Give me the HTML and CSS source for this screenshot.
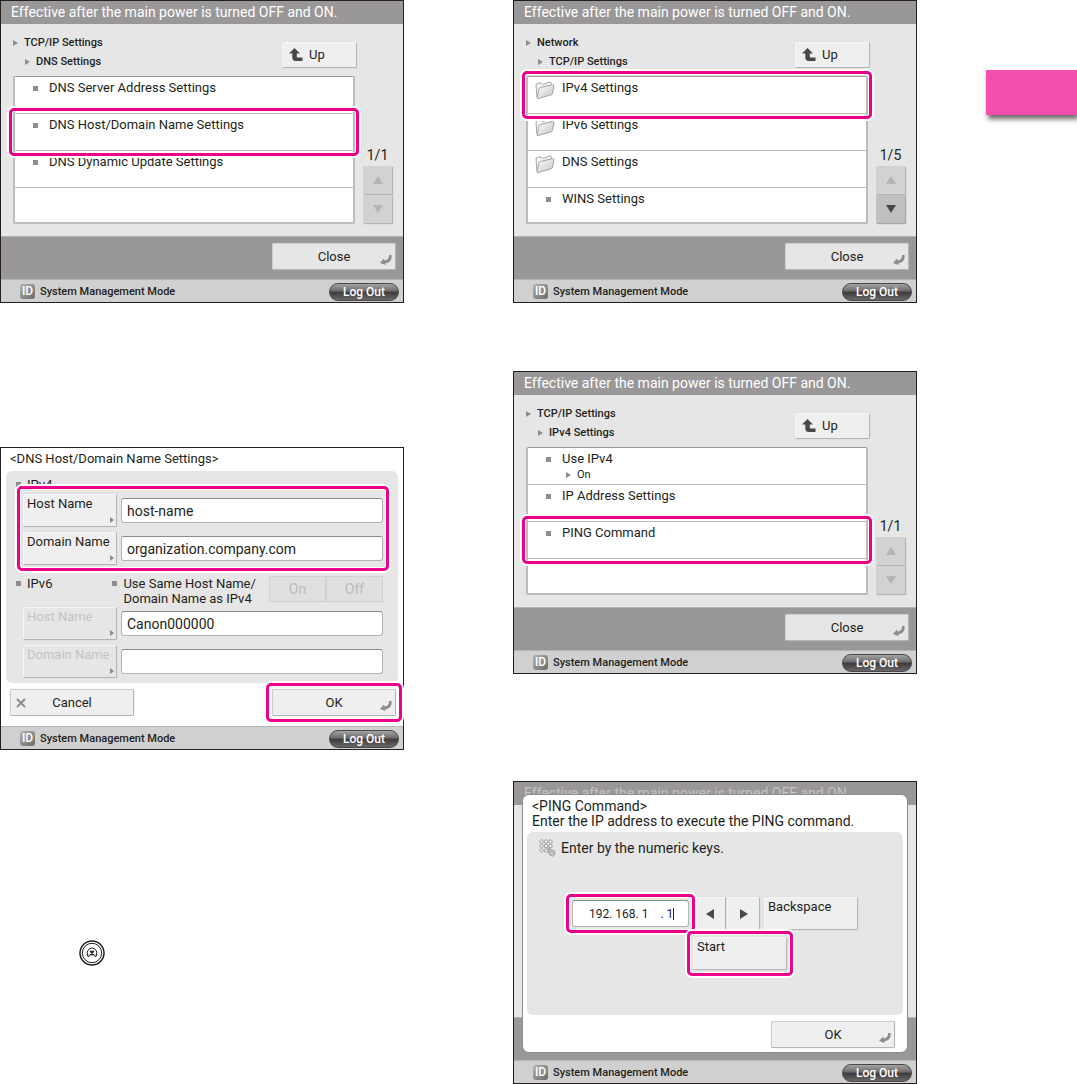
FILE: index.html
```html
<!DOCTYPE html>
<html lang="en">
<head>
    <meta charset="UTF-8">
    <meta name="viewport" content="width=device-width, initial-scale=1.0">
    <title>TCP/IP Settings</title>
    <link rel="stylesheet" href="styles.css">
</head>
<body>
    <!-- shared icons -->
    <svg class="defs" aria-hidden="true">
        <defs>
            <linearGradient id="folder-fill" x1="0" y1="0" x2="1" y2="1">
                <stop offset="0" stop-color="#ffffff"/>
                <stop offset="1" stop-color="#c4c4c4"/>
            </linearGradient>
            <symbol id="i-up" viewBox="0 0 14 14">
                <path d="M5.500 0 L11 5.500 H7.800 V8.500 Q7.800 9.500 8.800 9.500 H13.500 V13 H7 Q3.300 13 3.300 9.500 V5.500 H0 Z" fill="#4a4748"/>
            </symbol>
            <symbol id="i-enter" viewBox="0 0 12 10">
                <path d="M9 0 L11.500 0 Q12.500 7.500 5.500 8.300 L5.500 10 L0 8 L4 3.500 L4.500 5.500 Q9.500 5 9 0 Z" fill="#8f8c8d"/>
            </symbol>
            <symbol id="i-folder" viewBox="0 0 20 20">
                <path d="M2 17 L1 5 Q1 3.500 2.500 3.300 L6 3 L7.500 4.500 L15 2 Q16.500 2 16.500 3.500 V7" fill="#f4f4f4" stroke="#a4a4a4"/>
                <path d="M2 18 L4 9 Q4.300 7.800 5.500 7.500 L17.500 4.600 Q19 4.500 18.800 6 L17.500 13.500 Q17.300 14.500 16.300 14.800 L3 18.500 Q2 18.700 2 18 Z" fill="url(#folder-fill)" stroke="#a4a4a4"/>
            </symbol>
        </defs>
    </svg>

    <div class="page">
        <main class="columns">
            <div class="column">
                <!-- DNS Settings -->
                <section class="screen">
                    <header class="notice">Effective after the main power is turned OFF and ON.</header>
                    <div class="screen-body">
                        <div class="path-row">
                            <div class="path">
                                <p><i class="tri"></i>TCP/IP Settings</p>
                                <p class="sub"><i class="tri"></i>DNS Settings</p>
                            </div>
                            <button class="btn up"><svg><use href="#i-up"/></svg>Up</button>
                        </div>
                        <div class="list-row">
                            <ul class="list">
                                <li><i class="dot"></i>DNS Server Address Settings</li>
                                <li class="marked"><i class="dot"></i>DNS Host/Domain Name Settings<span class="mark"></span></li>
                                <li><i class="dot"></i>DNS Dynamic Update Settings</li>
                                <li></li>
                            </ul>
                            <div class="pager">
                                <span>1/1</span>
                                <button disabled aria-label="Previous page"><i class="arrow-up"></i></button>
                                <button disabled aria-label="Next page"><i class="arrow-down"></i></button>
                            </div>
                        </div>
                    </div>
                    <div class="actions">
                        <button class="btn wide">Close<svg class="enter"><use href="#i-enter"/></svg></button>
                    </div>
                    <footer class="status">
                        <span class="id">ID</span>
                        <span>System Management Mode</span>
                        <button class="logout">Log Out</button>
                    </footer>
                </section>

                <!-- DNS Host/Domain Name Settings -->
                <section class="screen screen-form">
                    <h2>&lt;DNS Host/Domain Name Settings&gt;</h2>
                    <div class="panel form">
                        <p class="label"><i class="dot"></i>IPv4</p>
                        <div class="fields marked">
                            <button class="btn key" id="host4">Host Name<i class="corner"></i></button>
                            <input class="field" type="text" value="host-name" aria-labelledby="host4">
                            <button class="btn key" id="domain4">Domain Name<i class="corner"></i></button>
                            <input class="field" type="text" value="organization.company.com" aria-labelledby="domain4">
                            <span class="mark"></span>
                        </div>
                        <div class="same-host">
                            <p class="label"><i class="dot"></i>IPv6</p>
                            <p class="label"><i class="dot"></i>Use Same Host Name/<br>Domain Name as IPv4</p>
                            <div class="switch">
                                <button disabled>On</button>
                                <button disabled>Off</button>
                            </div>
                        </div>
                        <div class="fields">
                            <button class="btn key" id="host6" disabled>Host Name<i class="corner"></i></button>
                            <input class="field" type="text" value="Canon000000" aria-labelledby="host6">
                            <button class="btn key" id="domain6" disabled>Domain Name<i class="corner"></i></button>
                            <input class="field" type="text" value="" aria-labelledby="domain6">
                        </div>
                    </div>
                    <div class="actions plain">
                        <button class="btn wide cancel"><svg viewBox="0 0 10 10"><path d="M1 1 L9 9 M9 1 L1 9" stroke="#8f8c8d" stroke-width="2"/></svg>Cancel</button>
                        <div class="marked">
                            <button class="btn wide">OK<svg class="enter"><use href="#i-enter"/></svg></button>
                            <span class="mark"></span>
                        </div>
                    </div>
                    <footer class="status">
                        <span class="id">ID</span>
                        <span>System Management Mode</span>
                        <button class="logout">Log Out</button>
                    </footer>
                </section>

                <!-- Settings/Registration key -->
                <svg class="settings-key" viewBox="0 0 26 26" role="img" aria-label="Settings key" fill="none" stroke="#231f20">
                    <circle cx="13" cy="13" r="12" stroke-width="1.500"/>
                    <circle cx="13" cy="13" r="9.700"/>
                    <path d="M9 15.500 A4.800 4.800 0 1 1 17 15.500 M8 14.500 L9 16.500 L11 15.500 M18 14.500 L17 16.500 L15 15.500"/>
                    <path d="M13 10.500 V15.500 M11 11 L15 15 M15 11 L11 15" stroke-width="1.300"/>
                </svg>
            </div>

            <div class="column">
                <!-- TCP/IP Settings -->
                <section class="screen">
                    <header class="notice">Effective after the main power is turned OFF and ON.</header>
                    <div class="screen-body">
                        <div class="path-row">
                            <div class="path">
                                <p><i class="tri"></i>Network</p>
                                <p class="sub"><i class="tri"></i>TCP/IP Settings</p>
                            </div>
                            <button class="btn up"><svg><use href="#i-up"/></svg>Up</button>
                        </div>
                        <div class="list-row">
                            <ul class="list">
                                <li class="marked"><svg class="folder"><use href="#i-folder"/></svg>IPv4 Settings<span class="mark"></span></li>
                                <li><svg class="folder"><use href="#i-folder"/></svg>IPv6 Settings</li>
                                <li><svg class="folder"><use href="#i-folder"/></svg>DNS Settings</li>
                                <li><i class="dot"></i>WINS Settings</li>
                            </ul>
                            <div class="pager">
                                <span>1/5</span>
                                <button disabled aria-label="Previous page"><i class="arrow-up"></i></button>
                                <button aria-label="Next page"><i class="arrow-down"></i></button>
                            </div>
                        </div>
                    </div>
                    <div class="actions">
                        <button class="btn wide">Close<svg class="enter"><use href="#i-enter"/></svg></button>
                    </div>
                    <footer class="status">
                        <span class="id">ID</span>
                        <span>System Management Mode</span>
                        <button class="logout">Log Out</button>
                    </footer>
                </section>

                <!-- IPv4 Settings -->
                <section class="screen screen-ipv4">
                    <header class="notice">Effective after the main power is turned OFF and ON.</header>
                    <div class="screen-body">
                        <div class="path-row">
                            <div class="path">
                                <p><i class="tri"></i>TCP/IP Settings</p>
                                <p class="sub"><i class="tri"></i>IPv4 Settings</p>
                            </div>
                            <button class="btn up"><svg><use href="#i-up"/></svg>Up</button>
                        </div>
                        <div class="list-row">
                            <ul class="list">
                                <li><i class="dot"></i><div>Use IPv4<p class="value"><i class="tri"></i>On</p></div></li>
                                <li><i class="dot"></i>IP Address Settings</li>
                                <li class="marked"><i class="dot"></i>PING Command<span class="mark"></span></li>
                                <li></li>
                            </ul>
                            <div class="pager">
                                <span>1/1</span>
                                <button disabled aria-label="Previous page"><i class="arrow-up"></i></button>
                                <button disabled aria-label="Next page"><i class="arrow-down"></i></button>
                            </div>
                        </div>
                    </div>
                    <div class="actions">
                        <button class="btn wide">Close<svg class="enter"><use href="#i-enter"/></svg></button>
                    </div>
                    <footer class="status">
                        <span class="id">ID</span>
                        <span>System Management Mode</span>
                        <button class="logout">Log Out</button>
                    </footer>
                </section>

                <!-- PING Command dialog -->
                <section class="screen screen-ping">
                    <header class="notice dim">Effective after the main power is turned OFF and ON.</header>
                    <div class="screen-body"></div>
                    <div class="actions"></div>
                    <footer class="status">
                        <span class="id">ID</span>
                        <span>System Management Mode</span>
                        <button class="logout">Log Out</button>
                    </footer>
                    <div class="dialog">
                        <h2>&lt;PING Command&gt;<br>Enter the IP address to execute the PING command.</h2>
                        <div class="panel">
                            <p class="hint">
                                <svg viewBox="0 0 17 18" fill="#f4f4f4" stroke="#9a9a9a">
                                    <circle cx="2.500" cy="2.500" r="1.700"/><circle cx="7" cy="2.500" r="1.700"/><circle cx="11.500" cy="2.500" r="1.700"/>
                                    <circle cx="2.500" cy="7" r="1.700"/><circle cx="7" cy="7" r="1.700"/><circle cx="11.500" cy="7" r="1.700"/>
                                    <circle cx="2.500" cy="11.500" r="1.700"/><circle cx="7" cy="11.500" r="1.700"/>
                                    <path d="M9 9 L10.500 8.500 L12 11 L15 11.500 L16 15 L13.500 17.300 L11 16 L9 13 L10.500 12.500 Z" fill="#c4c4c4"/>
                                </svg>
                                <label for="ip">Enter by the numeric keys.</label>
                            </p>
                            <div class="keys">
                                <div class="marked">
                                    <div class="field ip">
                                        <input id="ip" type="text" value="192. 168. 1    . 1">
                                        <i class="caret"></i>
                                    </div>
                                    <span class="mark"></span>
                                </div>
                                <div class="move">
                                    <button class="btn" aria-label="Left"><i class="arrow-left"></i></button>
                                    <button class="btn" aria-label="Right"><i class="arrow-right"></i></button>
                                </div>
                                <button class="btn key">Backspace</button>
                                <div class="marked start">
                                    <button class="btn key">Start</button>
                                    <span class="mark"></span>
                                </div>
                            </div>
                        </div>
                        <button class="btn wide">OK<svg class="enter"><use href="#i-enter"/></svg></button>
                    </div>
                </section>
            </div>
        </main>
        <aside class="tab"></aside>
    </div>
</body>
</html>
```
FILE: styles.css
```css
* {
    box-sizing: border-box;
}

body {
    margin: 0;
    background: #fff;
    color: #231f20;
    font: 14px/18px Roboto, "Liberation Sans", sans-serif;
}

p, h2, ul {
    margin: 0;
    padding: 0;
}

button, input {
    font: inherit;
    color: inherit;
    border: 0;
    padding: 0;
}

.defs {
    display: block;
    width: 0;
    height: 0;
}

/* page */
.page {
    display: flex;
    overflow: hidden;
}

.columns {
    flex: 1;
    display: flex;
    gap: 109px;
    padding-right: 69px;
}

.column {
    flex: 1;
    min-width: 0;
}

.tab {
    width: 91px;
    height: 45px;
    margin-top: 70px;
    background: #f44eae;
    box-shadow: 2px 4px 5px rgba(0, 0, 0, 0.6);
}

/* device screen */
.screen {
    position: relative;
    border: 1px solid #231f20;
    background: #e6e6e6;
}

.screen-form {
    margin-top: 144px;
    background: #fff;
}

.screen-ipv4 {
    margin-top: 68px;
}

.screen-ping {
    margin-top: 107px;
}

.notice {
    padding: 2px 10px 3px;
    background: #9a9798;
    color: #fff;
}

.notice.dim {
    color: #c4c2c3;
}

.screen-body {
    min-height: 212px;
    padding: 9px 11px 0 12px;
}

.path-row {
    display: flex;
    justify-content: space-between;
    padding-right: 35px;
}

.path {
    height: 43px;
    font-size: 11px;
    line-height: 19px;
    font-weight: 500;
}

.path p {
    display: flex;
    align-items: center;
    gap: 6px;
}

.path .sub {
    padding-left: 12px;
}

/* small marks */
.tri {
    border-left: 5px solid #8f8c8d;
    border-top: 3px solid transparent;
    border-bottom: 3px solid transparent;
}

.dot {
    width: 5px;
    height: 5px;
    background: #8f8c8d;
}

/* buttons */
.btn {
    position: relative;
    background: #efefef;
    border: 1px solid #f8f8f8;
    border-right-color: #b4b4b4;
    border-bottom-color: #b4b4b4;
    border-radius: 2px;
    box-shadow: 0 0 1px #b4b4b4;
    font-size: 13px;
    white-space: nowrap;
}

.up {
    display: flex;
    align-items: center;
    gap: 6px;
    width: 75px;
    height: 26px;
    margin-top: 9px;
    padding-left: 6px;
}

.up svg {
    width: 14px;
    height: 14px;
}

.wide {
    width: 124px;
    height: 27px;
    border-left-color: #cfcfcf;
    border-top-color: #cfcfcf;
}

.enter {
    position: absolute;
    right: 3px;
    bottom: 4px;
    width: 12px;
    height: 10px;
}

.key {
    width: 94px;
    height: 33px;
    padding: 0 3px 13px;
    text-align: left;
}

.key:disabled {
    color: #c4c4c4;
    background: #e6e6e6;
}

.corner {
    position: absolute;
    right: 2px;
    bottom: 3px;
    border-left: 4px solid #8f8c8d;
    border-top: 3px solid transparent;
    border-bottom: 3px solid transparent;
}

/* settings list */
.list-row {
    display: flex;
    gap: 8px;
}

.list {
    flex: 1;
    list-style: none;
    background: #fff;
    border: 2px solid #bcbcbc;
    border-top: 1px solid #9a9798;
    border-radius: 2px;
    font-size: 13px;
}

.list li {
    display: flex;
    align-items: flex-start;
    min-height: 37px;
    padding: 2px 0 0 34px;
    border-bottom: 1px solid #bcbcbc;
}

.list li:last-child {
    min-height: 34px;
    border-bottom: 0;
}

.list .dot {
    margin: 7px 11px 0 -16px;
}

.folder {
    width: 20px;
    height: 20px;
    margin: 1px 7px 0 -27px;
}

.value {
    display: flex;
    align-items: center;
    gap: 6px;
    padding-left: 4px;
    font-size: 11px;
    line-height: 14px;
}

.pager {
    align-self: flex-end;
    display: flex;
    flex-direction: column;
    gap: 1px;
    width: 29px;
    padding-bottom: 1px;
    text-align: center;
}

.pager span {
    padding-bottom: 1px;
}

.pager button {
    display: flex;
    align-items: center;
    justify-content: center;
    height: 28px;
    background: #c0c0c0;
    box-shadow: 1px 1px 1px #a4a4a4;
}

.pager button:disabled {
    background: #d2d2d2;
    box-shadow: 1px 1px 1px #b4b4b4;
}

.arrow-up, .arrow-down {
    border-left: 5px solid transparent;
    border-right: 5px solid transparent;
}

.arrow-up {
    border-bottom: 8px solid #4a4748;
}

.arrow-down {
    border-top: 8px solid #4a4748;
}

:disabled .arrow-up {
    border-bottom-color: #b4b4b4;
}

:disabled .arrow-down {
    border-top-color: #b4b4b4;
}

/* bottom bars */
.actions {
    display: flex;
    align-items: flex-start;
    justify-content: flex-end;
    min-height: 43px;
    padding: 6px 7px 0;
    background: #9a9798;
    border-top: 1px solid #b4b4b4;
}

.actions .btn {
    display: block;
    background: #e6e6e6;
}

.actions.plain {
    justify-content: space-between;
    padding-left: 9px;
    background: #fff;
    border: 0;
}

.actions.plain .btn {
    background: #efefef;
}

.cancel svg {
    position: absolute;
    left: 5px;
    top: 8px;
    width: 10px;
    height: 10px;
}

.status {
    display: flex;
    align-items: center;
    gap: 5px;
    height: 23px;
    padding: 1px 4px 0 19px;
    background: #d0d0d0;
    border-top: 1px solid #b4b4b4;
    font-size: 11px;
    font-weight: 500;
}

.id {
    width: 15px;
    height: 15px;
    border-radius: 3px;
    background: linear-gradient(135deg, #b4b4b4, #6b6869);
    color: #fff;
    font-size: 12px;
    line-height: 15px;
    text-align: center;
}

.logout {
    width: 70px;
    height: 18px;
    margin-left: auto;
    border: 1px solid #4a4748;
    border-radius: 9px;
    background: linear-gradient(#a4a4a4, #6b6869 45%, #3c393a 50%, #6b6869);
    color: #fff;
    font-size: 12px;
    line-height: 16px;
}

/* highlight frame, lies over its parent */
.marked {
    position: relative;
}

.mark {
    position: absolute;
    inset: -6px;
    z-index: 1;
    border: 3px solid #ec008c;
    border-radius: 5px;
    box-shadow: 0 0 0 2px #fff, inset 0 0 0 1px #fff;
    pointer-events: none;
}

/* host and domain form */
.screen-form h2, .dialog h2 {
    font-size: 14px;
    font-weight: 400;
}

.screen-form h2 {
    padding: 2px 9px 3px;
    font-size: 13px;
}

.panel {
    background: #e6e6e6;
    border-radius: 6px;
}

.form {
    margin: 0 5px;
    padding: 6px 15px 5px 17px;
}

.label {
    display: flex;
    gap: 6px;
    margin-left: -7px;
    font-size: 13px;
    line-height: 15px;
}

.label .dot {
    margin-top: 5px;
}

.fields {
    display: grid;
    grid-template-columns: 94px 1fr;
    gap: 5px 4px;
    align-items: center;
}

.form .fields:nth-child(2) {
    padding-top: 2px;
}

.field {
    min-width: 0;
    height: 25px;
    padding: 0 5px;
    background: #fff;
    border: 1px solid #b4b4b4;
    border-top-color: #8f8c8d;
    border-radius: 3px;
}

.same-host {
    display: flex;
    justify-content: space-between;
    padding: 11px 0 1px;
}

.same-host .label:nth-child(2) {
    flex: 1;
    margin-left: 60px;
}

.switch {
    display: flex;
}

.switch button {
    width: 57px;
    height: 26px;
    background: #e0e0e0;
    border: 1px solid #d0d0d0;
    color: #bcbcbc;
}

/* ping dialog */
.dialog {
    position: absolute;
    inset: 12px 8px 30px;
    display: flex;
    flex-direction: column;
    padding: 4px 4px 4px;
    background: #fff;
    border: 1px solid #8f8c8d;
    border-radius: 7px;
}

.dialog h2 {
    padding: 0 5px 3px;
    line-height: 15px;
}

.dialog .panel {
    flex: 1;
    padding: 7px 12px;
}

.dialog > .btn {
    align-self: flex-end;
    margin: 6px 8px 0;
}

.hint {
    display: flex;
    align-items: center;
    gap: 5px;
}

.hint svg {
    width: 17px;
    height: 18px;
}

.keys {
    display: grid;
    grid-template-columns: 117px 67px 94px;
    gap: 5px 4px;
    justify-content: center;
    padding-top: 40px;
}

.keys > .marked {
    align-self: center;
}

.keys .start {
    grid-column: 2 / 4;
    justify-self: start;
    margin-top: 2px;
}

.ip {
    display: flex;
    align-items: center;
    height: 27px;
    padding-left: 16px;
    font-size: 12px;
}

.ip input {
    width: 84px;
    background: none;
}

.caret {
    width: 1px;
    height: 12px;
    background: #231f20;
}

.move {
    display: flex;
    gap: 1px;
}

.move .btn {
    display: flex;
    flex: 1;
    align-items: center;
    justify-content: center;
}

.arrow-left, .arrow-right {
    border-top: 5px solid transparent;
    border-bottom: 5px solid transparent;
}

.arrow-left {
    border-right: 8px solid #4a4748;
}

.arrow-right {
    border-left: 8px solid #4a4748;
}

/* round key under the form */
.settings-key {
    display: block;
    width: 26px;
    height: 26px;
    margin: 190px 0 0 79px;
}
```
